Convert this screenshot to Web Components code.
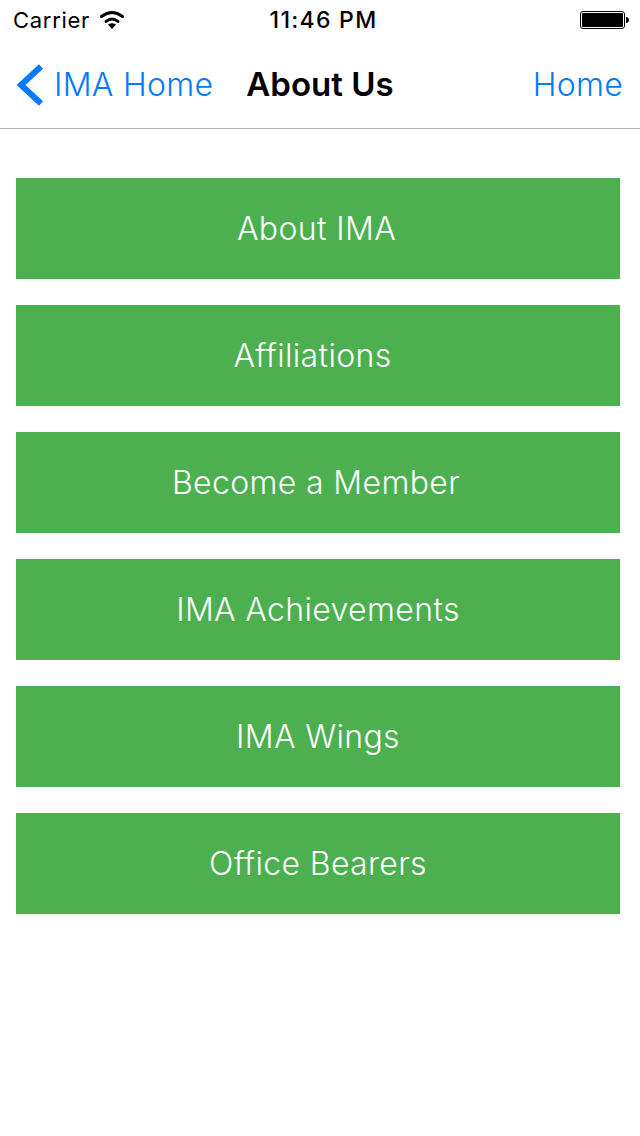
<!DOCTYPE html>
<html>
<head>
<meta charset="utf-8">
<title>About Us</title>
<style>
  html, body { margin: 0; background: #fff; }
  body { font-family: Inter, "Liberation Sans", sans-serif; }
</style>
</head>
<body>
<status-bar></status-bar>
<nav-bar back="IMA Home" heading="About Us" action="Home"></nav-bar>
<menu-list>
  <menu-button style="padding-right:3px">About IMA</menu-button>
  <menu-button style="padding-right:11px">Affiliations</menu-button>
  <menu-button style="padding-right:4px">Become a Member</menu-button>
  <menu-button>IMA Achievements</menu-button>
  <menu-button>IMA Wings</menu-button>
  <menu-button>Office Bearers</menu-button>
</menu-list>

<script>
class StatusBar extends HTMLElement {
  constructor() {
    super();
    this.shadowDOM = this.attachShadow({mode: "open"});
  }
  connectedCallback() {
    this.shadowDOM.innerHTML = `
    <style>
      :host {
        display: grid;
        grid-template-columns: 1fr auto 1fr;
        align-items: center;
        height: 40px;
        padding: 0 11px 0 13px;
        color: #000;
        font-size: 22px;
      }
      .left { display: flex; align-items: center; gap: 10px; }
      .carrier { letter-spacing: 0.7px; }
      .time { font-size: 23px; font-weight: 500; letter-spacing: 1.3px; padding-left: 5px; }
      .battery { justify-self: end; display: block; }
      .wifi { display: block; }
    </style>
    <div class="left">
      <span class="carrier">Carrier</span>
      <svg class="wifi" width="24" height="20" viewBox="0 0 24 20">
        <path d="M12 19L8 14.5Q12 12 16 14.5z" fill="#000"/>
        <path d="M6 11.5Q12 6.5 18 11.5" fill="none" stroke="#000" stroke-width="3" stroke-linecap="round"/>
        <path d="M1.5 6.5Q12 -1.5 22.5 6.5" fill="none" stroke="#000" stroke-width="3" stroke-linecap="round"/>
      </svg>
    </div>
    <span class="time">11:46 PM</span>
    <svg class="battery" width="49" height="20" viewBox="0 0 49 20">
      <rect x="0.5" y="1.5" width="44" height="17" rx="2.5" fill="#fff" stroke="#000"/>
      <rect x="2" y="3" width="41" height="14" rx="1" fill="#000"/>
      <path d="M46 7c2 0.3 3 1.4 3 3s-1 2.7-3 3z" fill="#000"/>
    </svg>`;
  }
}

class NavBar extends HTMLElement {
  constructor() {
    super();
    this.shadowDOM = this.attachShadow({mode: "open"});
  }
  connectedCallback() {
    this.shadowDOM.innerHTML = `
    <style>
      :host {
        display: flex;
        align-items: center;
        gap: 33px;
        box-sizing: border-box;
        height: 89px;
        padding: 1px 17px 0 16px;
        border-bottom: 1px solid #b2b2b2;
        font-size: 32px;
        font-weight: 350;
        letter-spacing: 0.3px;
        color: #007aff;
      }
      .back { display: flex; align-items: center; gap: 10px; }
      .back svg { display: block; }
      .action { margin-left: auto; }
      h1 { margin: -2px 0 0; font-size: 33px; font-weight: 600; letter-spacing: 0; color: #000; }
    </style>
    <span class="back">
      <svg width="28" height="42" viewBox="0 0 28 42">
        <path d="M25 2.5L5 21l20 18.5" fill="none" stroke="#007aff" stroke-width="6"/>
      </svg>
      <span>${this.getAttribute("back")}</span>
    </span>
    <h1>${this.getAttribute("heading")}</h1>
    <span class="action">${this.getAttribute("action")}</span>`;
  }
}

class MenuList extends HTMLElement {
  constructor() {
    super();
    this.shadowDOM = this.attachShadow({mode: "open"});
  }
  connectedCallback() {
    this.shadowDOM.innerHTML = `
    <style>
      :host {
        display: flex;
        flex-direction: column;
        gap: 26px;
        padding: 49px 20px 0 16px;
      }
    </style>
    <slot></slot>`;
  }
}

class MenuButton extends HTMLElement {
  constructor() {
    super();
    this.shadowDOM = this.attachShadow({mode: "open"});
  }
  connectedCallback() {
    this.shadowDOM.innerHTML = `
    <style>
      :host {
        display: flex;
        align-items: center;
        justify-content: center;
        height: 101px;
        background-color: #4caf50;
        color: #fff;
        font-size: 32px;
        font-weight: 300;
        letter-spacing: 0.35px;
        cursor: pointer;
      }
    </style>
    <slot></slot>`;
  }
}

customElements.define("status-bar", StatusBar);
customElements.define("nav-bar", NavBar);
customElements.define("menu-list", MenuList);
customElements.define("menu-button", MenuButton);
</script>
</body>
</html>
